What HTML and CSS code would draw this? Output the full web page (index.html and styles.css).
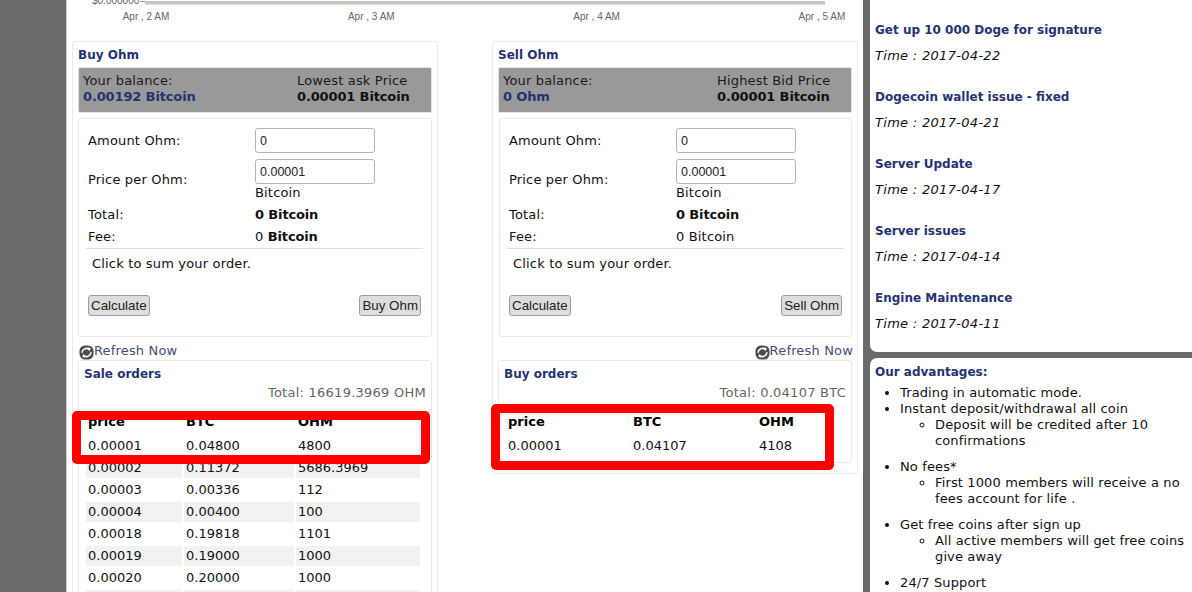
FILE: index.html
```html
<!DOCTYPE html>
<html lang="en">
<head>
<meta charset="utf-8">
<title>Ohm market</title>
<link rel="stylesheet" href="styles.css">
</head>
<body>
<div class="page">
  <main class="main">
    <div class="chart">
      <div class="axis-row"><span class="axis-value">$0.000000</span><span class="axis-tick"></span><span class="axis-line"></span></div>
      <div class="axis-labels"><span>Apr , 2 AM</span><span>Apr , 3 AM</span><span>Apr , 4 AM</span><span>Apr , 5 AM</span></div>
    </div>
    <div class="markets">
      <section class="market">
        <h3 class="title">Buy Ohm</h3>
        <div class="balance">
          <div>Your balance:<br><b class="navy">0.00192 Bitcoin</b></div>
          <div>Lowest ask Price<br><b>0.00001 Bitcoin</b></div>
        </div>
        <div class="order-form">
          <div class="grid">
            <span>Amount Ohm:</span><span><input class="field" value="0"></span>
            <span>Price per Ohm:</span><span><input class="field" value="0.00001"><span class="unit">Bitcoin</span></span>
            <span>Total:</span><b>0 Bitcoin</b>
            <span>Fee:</span><span>0 <b>Bitcoin</b></span>
          </div>
          <hr class="rule">
          <p class="hint">Click to sum your order.</p>
          <div class="actions"><button class="btn">Calculate</button><button class="btn">Buy Ohm</button></div>
        </div>
        <div class="refresh">
          <svg class="refresh-icon" viewBox="0 0 16 16"><rect x="0.5" y="0.5" width="15" height="15" rx="6" fill="#4d4d4d"/><path d="M3.2 8.2a4.8 4.8 0 0 1 7.6-3.6" fill="none" stroke="#fff" stroke-width="1.7"/><path d="M9.2 2.4l3.4 1-1.6 3.4z" fill="#fff"/><path d="M12.8 7.8a4.8 4.8 0 0 1-7.6 3.6" fill="none" stroke="#fff" stroke-width="1.7"/><path d="M6.8 13.6l-3.4-1 1.6-3.4z" fill="#fff"/></svg><span>Refresh Now</span>
        </div>
        <div class="orders">
          <h3 class="title">Sale orders</h3>
          <div class="total">Total: 16619.3969 OHM</div>
          <table class="book sale">
            <thead><tr><th>price</th><th>BTC</th><th>OHM</th></tr></thead>
            <tbody>
              <tr><td>0.00001</td><td>0.04800</td><td>4800</td></tr>
              <tr><td>0.00002</td><td>0.11372</td><td>5686.3969</td></tr>
              <tr><td>0.00003</td><td>0.00336</td><td>112</td></tr>
              <tr><td>0.00004</td><td>0.00400</td><td>100</td></tr>
              <tr><td>0.00018</td><td>0.19818</td><td>1101</td></tr>
              <tr><td>0.00019</td><td>0.19000</td><td>1000</td></tr>
              <tr><td>0.00020</td><td>0.20000</td><td>1000</td></tr>
              <tr><td>&nbsp;</td><td>&nbsp;</td><td>&nbsp;</td></tr>
            </tbody>
          </table>
          <div class="mark mark-sale"></div>
        </div>
      </section>
      <section class="market">
        <h3 class="title">Sell Ohm</h3>
        <div class="balance">
          <div>Your balance:<br><b class="navy">0 Ohm</b></div>
          <div>Highest Bid Price<br><b>0.00001 Bitcoin</b></div>
        </div>
        <div class="order-form order-form-sell">
          <div class="grid">
            <span>Amount Ohm:</span><span><input class="field" value="0"></span>
            <span>Price per Ohm:</span><span><input class="field" value="0.00001"><span class="unit">Bitcoin</span></span>
            <span>Total:</span><b>0 Bitcoin</b>
            <span>Fee:</span><span>0 Bitcoin</span>
          </div>
          <hr class="rule">
          <p class="hint">Click to sum your order.</p>
          <div class="actions"><button class="btn">Calculate</button><button class="btn">Sell Ohm</button></div>
        </div>
        <div class="refresh refresh-right">
          <svg class="refresh-icon" viewBox="0 0 16 16"><rect x="0.5" y="0.5" width="15" height="15" rx="6" fill="#4d4d4d"/><path d="M3.2 8.2a4.8 4.8 0 0 1 7.6-3.6" fill="none" stroke="#fff" stroke-width="1.7"/><path d="M9.2 2.4l3.4 1-1.6 3.4z" fill="#fff"/><path d="M12.8 7.8a4.8 4.8 0 0 1-7.6 3.6" fill="none" stroke="#fff" stroke-width="1.7"/><path d="M6.8 13.6l-3.4-1 1.6-3.4z" fill="#fff"/></svg><span>Refresh Now</span>
        </div>
        <div class="orders">
          <h3 class="title">Buy orders</h3>
          <div class="total">Total: 0.04107 BTC</div>
          <table class="book buy">
            <thead><tr><th>price</th><th>BTC</th><th>OHM</th></tr></thead>
            <tbody>
              <tr><td>0.00001</td><td>0.04107</td><td>4108</td></tr>
            </tbody>
          </table>
          <div class="mark mark-buy"></div>
        </div>
      </section>
    </div>
  </main>
  <aside class="side">
    <div class="panel news">
      <article class="news-item"><h4 class="title">Get up 10 000 Doge for signature</h4><p class="time">Time : 2017-04-22</p></article>
      <article class="news-item"><h4 class="title">Dogecoin wallet issue - fixed</h4><p class="time">Time : 2017-04-21</p></article>
      <article class="news-item"><h4 class="title">Server Update</h4><p class="time">Time : 2017-04-17</p></article>
      <article class="news-item"><h4 class="title">Server issues</h4><p class="time">Time : 2017-04-14</p></article>
      <article class="news-item"><h4 class="title">Engine Maintenance</h4><p class="time">Time : 2017-04-11</p></article>
    </div>
    <div class="panel advantages">
      <h4 class="title">Our advantages:</h4>
      <ul class="list">
        <li>Trading in automatic mode.</li>
        <li>Instant deposit/withdrawal all coin
          <ul class="sublist"><li>Deposit will be credited after 10 confirmations</li></ul>
        </li>
        <li>No fees*
          <ul class="sublist"><li>First 1000 members will receive a no fees account for life .</li></ul>
        </li>
        <li>Get free coins after sign up
          <ul class="sublist"><li>All active members will get free coins give away</li></ul>
        </li>
        <li>24/7 Support</li>
      </ul>
    </div>
  </aside>
</div>
</body>
</html>
```
FILE: styles.css
```css
* { box-sizing: border-box; }
html, body { margin: 0; height: 592px; overflow: hidden; }
body {
  background: #6b6b6b;
  color: #111;
  font: 13px/16px "DejaVu Sans", Verdana, sans-serif;
  letter-spacing: 0.17px;
}
.page { display: flex; height: 592px; padding-left: 66px; overflow: hidden; }
.main {
  width: 797px;
  flex: none;
  background: #fff;
  border-left: 1px solid #ccc;
  height: 592px;
  overflow: hidden;
}
.side { width: 322px; flex: none; margin-left: 7px; display: flex; flex-direction: column; gap: 6px; }
.panel { background: #fff; padding-left: 5px; padding-right: 4px; }
.news { border-radius: 0 0 0 7px; padding-top: 22px; padding-bottom: 0; height: 352px; }
.advantages { border-radius: 7px 0 0 0; padding-top: 6px; flex: 1; overflow: hidden; }

.chart { height: 41px; overflow: hidden; position: relative; }
.axis-row { display: flex; align-items: center; height: 8px; margin-top: -3px; padding-left: 25px; }
.axis-value { font: 10px/8px "Liberation Sans", Arial, sans-serif; letter-spacing: 0; color: #666; width: 48px; }
.axis-tick { width: 5px; height: 1px; background: #999; }
.axis-line { width: 680px; height: 3px; background: #c4c4c4; margin-top: 2px; box-shadow: 0 1px 1px #ddd; }
.axis-labels {
  display: grid;
  grid-template-columns: repeat(4, 90px);
  column-gap: 135.3px;
  justify-items: center;
  padding-left: 34px;
  margin-top: 6px;
  font: 10px/12px "Liberation Sans", Arial, sans-serif;
  letter-spacing: 0;
  color: #666;
}

.markets { display: flex; gap: 54px; padding-left: 5px; align-items: flex-start; }
.market {
  width: 366px;
  flex: none;
  border: 1px solid #e9e9e9;
  border-radius: 3px;
  padding: 5px 5px 10px 5px;
  position: relative;
}
.title { margin: 0; font-size: 12px; line-height: 16px; font-weight: bold; color: #253372; letter-spacing: 0; }
.balance {
  margin-top: 4px;
  height: 46px;
  background: #999;
  border: 1px solid #e4e4e4;
  border-radius: 2px;
  padding: 5px 4px;
  display: grid;
  grid-template-columns: 214px 1fr;
  width: 354px;
  color: #1a1a1a;
}
b { letter-spacing: -0.14px; }
.balance b { color: #111; }
.balance .navy { color: #253372; }
.order-form {
  margin-top: 5px;
  width: 354px;
  height: 219px;
  border: 1px solid #e9e9e9;
  border-radius: 3px;
  padding: 9px 8px 0 9px;
}
.order-form-sell { margin-left: 1px; width: 353px; }
.grid { display: grid; grid-template-columns: 167px 1fr; row-gap: 6px; align-items: center; }
.field {
  width: 120px;
  height: 25px;
  border: 1px solid #b5b5b5;
  border-radius: 3px;
  padding: 0 4px;
  font: 12.5px "Liberation Sans", Arial, sans-serif;
  letter-spacing: 0;
  color: #222;
  background: #fff;
  display: block;
}
.unit { display: block; margin-top: 1px; }
.rule { border: 0; border-top: 1px solid #ddd; margin: 3px 0 0 -2px; width: 337px; }
.hint { margin: 7px 0 0 4px; }
.actions { display: flex; justify-content: space-between; margin-top: 23px; width: 333px; }
.btn {
  height: 21px;
  padding: 0 2px;
  background: #ddd;
  border: 1px solid #9e9e9e;
  border-radius: 3px;
  font: 13.33px/17px "Liberation Sans", Arial, sans-serif;
  letter-spacing: 0;
  color: #222;
}
.refresh { display: flex; align-items: center; height: 16px; margin-top: 6px; padding-left: 1px; color: #484d72; }
.refresh-right { justify-content: flex-end; padding-right: 3px; width: 358px; }
.refresh-icon { width: 15px; height: 15px; flex: none; margin-top: 3px; }

.orders {
  margin-top: 1px;
  width: 354px;
  border: 1px solid #e9e9e9;
  border-radius: 3px;
  padding: 5px 5px 4px 5px;
  position: relative;
}
.total { text-align: right; color: #666; margin-top: 3px; letter-spacing: 0.25px; }
.book { border-collapse: separate; border-spacing: 2px; table-layout: fixed; margin-top: 9px; letter-spacing: 0; }
.book th, .book td { padding: 0 2px; height: 20px; text-align: left; font-weight: normal; vertical-align: middle; }
.book th { font-weight: bold; height: 22px; padding-bottom: 2px; color: #000; }
.book tbody tr:nth-child(even) td { background: #f2f2f2; }
.sale { width: 338px; }
.sale th:nth-child(1) { width: 96px; }
.sale th:nth-child(2) { width: 110px; }
.sale th:nth-child(3) { width: 124px; }
.buy { width: 338px; }
.buy th:nth-child(1) { width: 123px; }
.buy th:nth-child(2) { width: 124px; }
.buy th:nth-child(3) { width: 83px; }

.mark { position: absolute; border: 9px solid #f00; border-radius: 5px; }
.mark-sale { left: -7px; top: 50px; width: 358px; height: 53px; }
.mark-buy { left: -8px; top: 43px; width: 343px; height: 66px; }

.news-item { margin-bottom: 25px; }
.time { margin: 10px 0 0; font-style: italic; letter-spacing: 0.3px; }
.list { margin: 5px 0 0; padding-left: 25px; list-style: disc; letter-spacing: 0.13px; }
.sublist { margin: 0 0 10px; padding-left: 35px; list-style: circle; }
```
